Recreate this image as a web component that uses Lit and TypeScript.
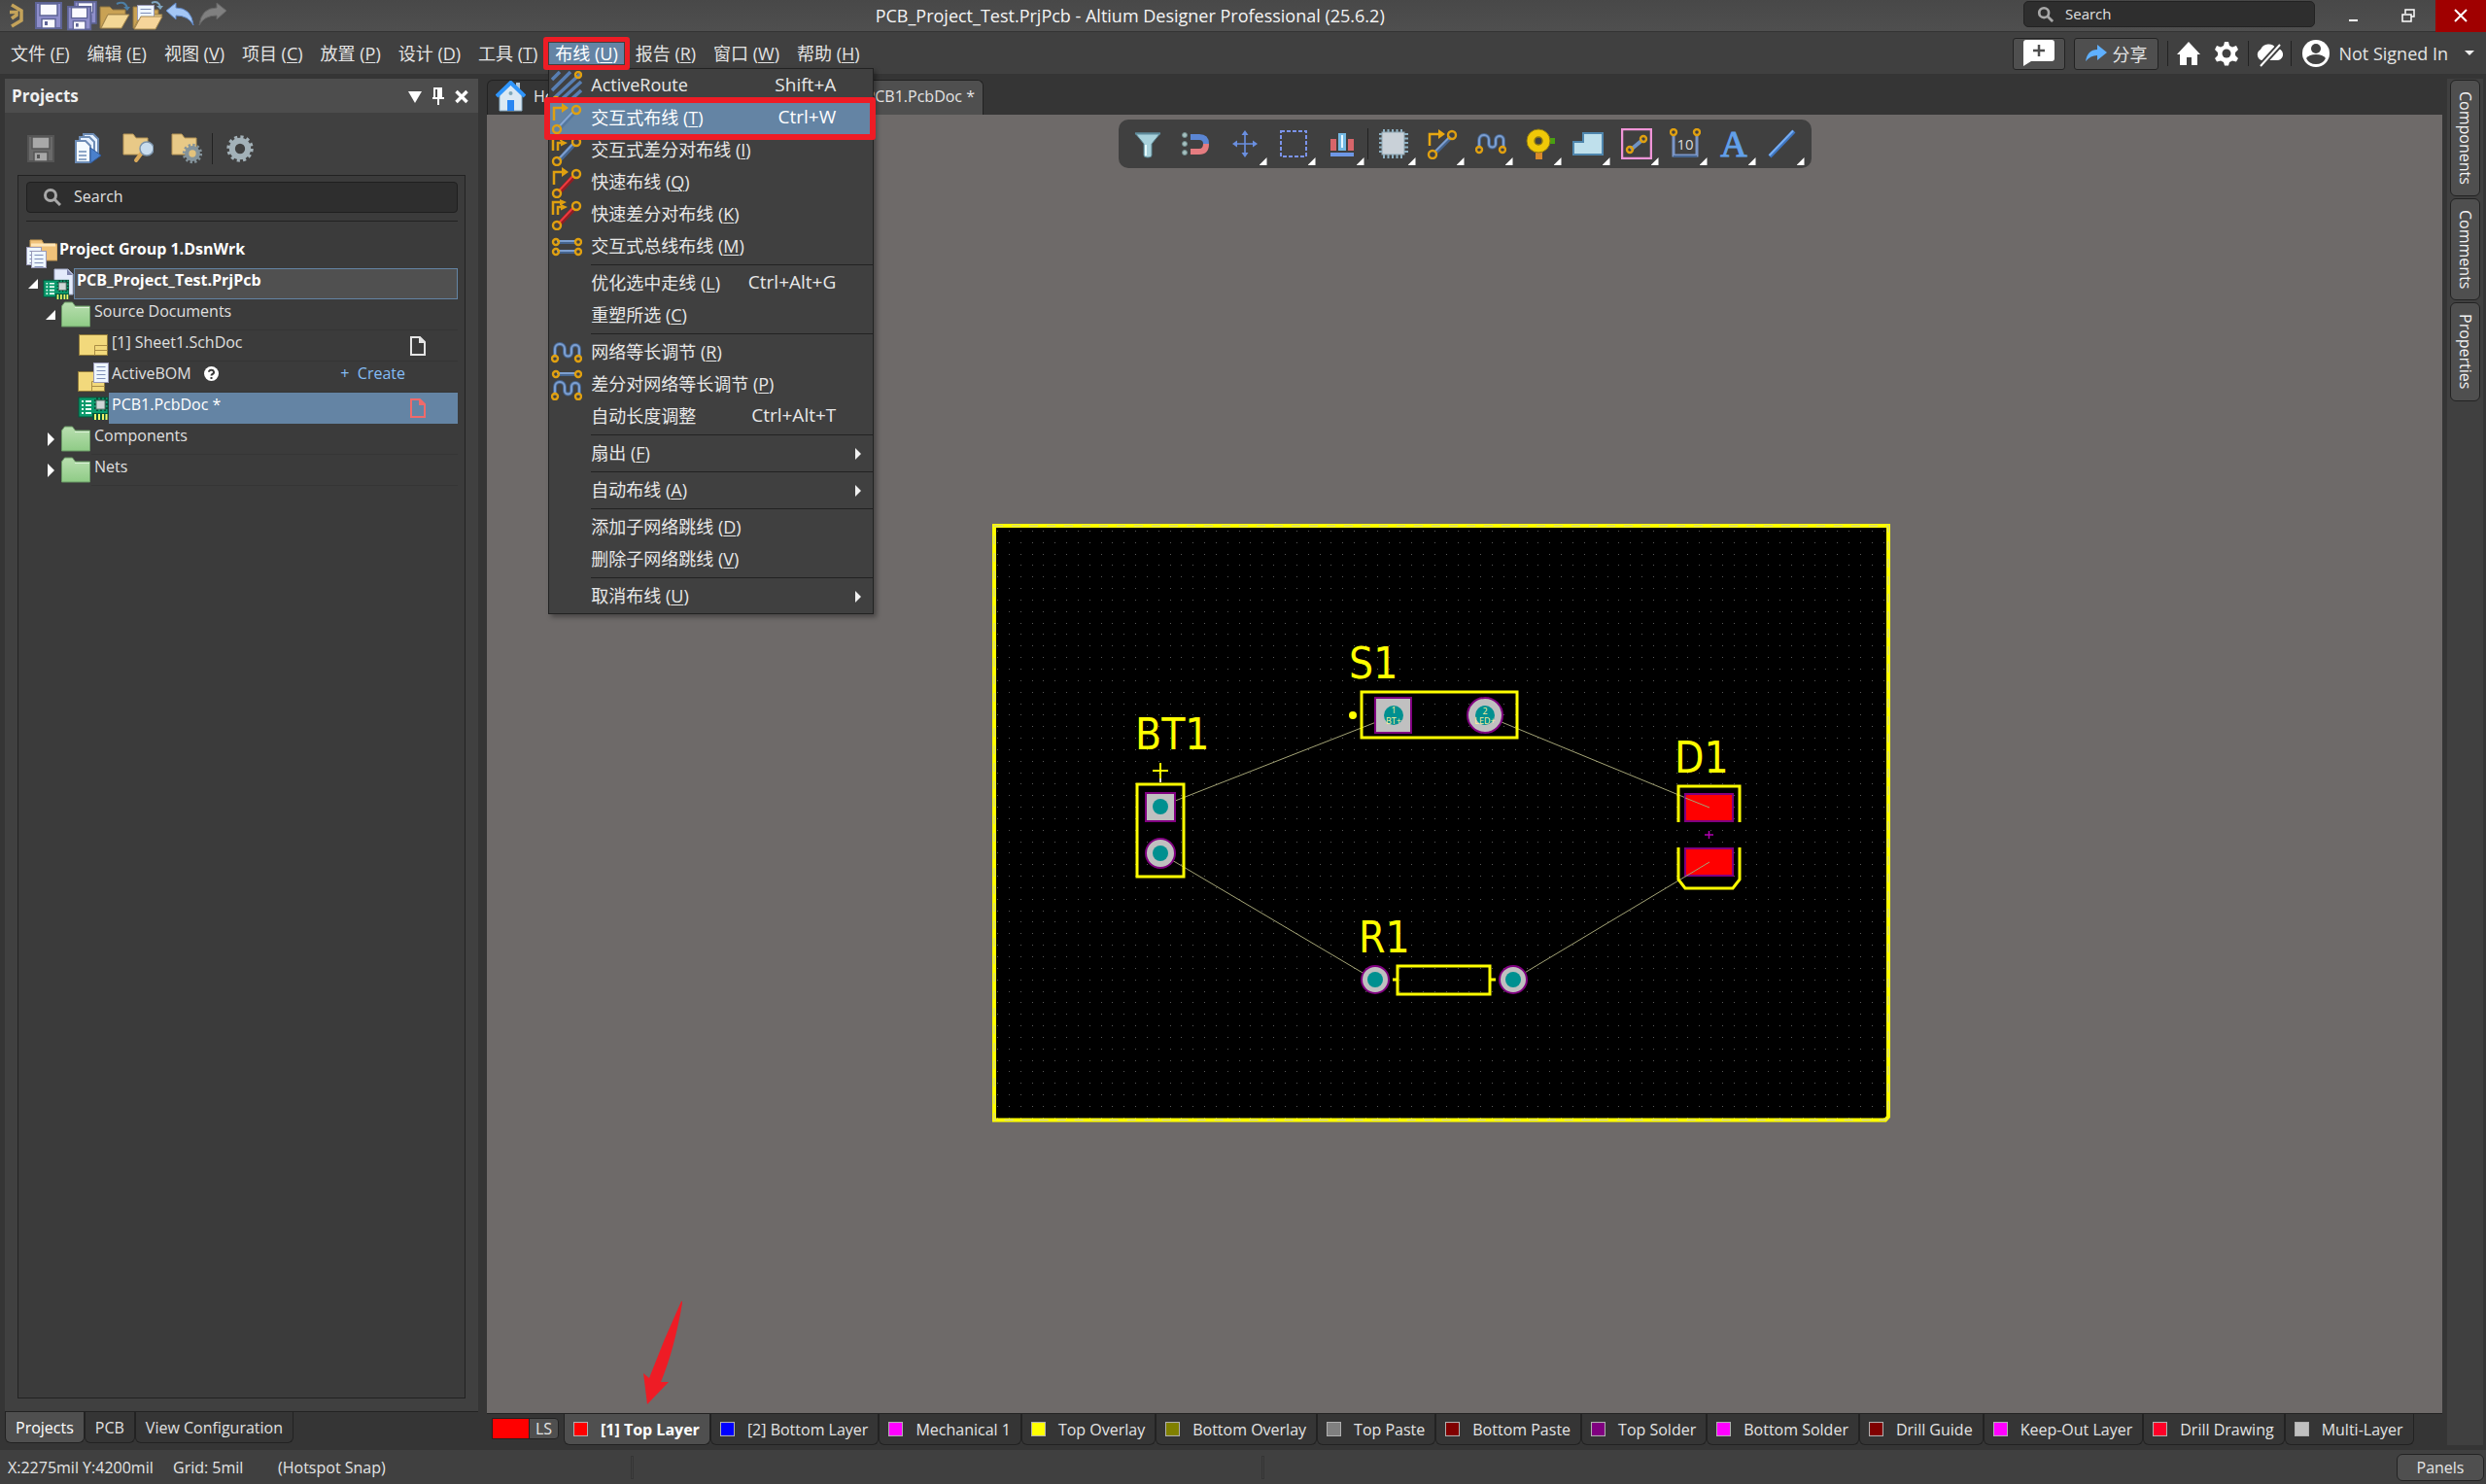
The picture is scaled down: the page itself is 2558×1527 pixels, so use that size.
import { LitElement, html, svg, css, nothing } from "lit";
import { customElement } from "lit/decorators.js";
import { classMap } from "lit/directives/class-map.js";

/* ---------- shared icon pieces (32 x 32 grid) ---------- */

const icon = (body: unknown, cls = "ico") =>
  html`<svg class=${cls} viewBox="0 0 32 32" aria-hidden="true">${body}</svg>`;

const ring = (x: number, y: number, r = 4) =>
  svg`<circle cx=${x} cy=${y} r=${r} fill="none" stroke="#e0a010" stroke-width="2.4"/>`;

const floppy = (x: number, y: number, s: number, a = "#8f8fcb", b = "#5e6496", c = "#fafaff") => svg`
  <g transform="translate(${x} ${y}) scale(${s})">
    <rect x="1" y="1" width="26" height="26" fill=${a} stroke=${b} stroke-width="2"/>
    <rect x="5" y="2" width="18" height="12" fill=${c} stroke=${b} stroke-width="1.5"/>
    <rect x="7" y="17.500" width="14" height="9.500" fill=${c} stroke=${b} stroke-width="1.5"/>
    <rect x="10" y="20" width="3" height="4" fill=${b}/>
  </g>`;

const folderOpen = (y = 0) => svg`
  <path d="M1 ${y + 7}h10l3 3h13v5H9L2 ${y + 29}H1z" fill="#c9a254" stroke="#8f7540"/>
  <path d="M9 ${y + 15}h22l-8 14H2z" fill="#f3d795" stroke="#a3864c"/>`;

const gear = (cx: number, cy: number, r: number, fill: string, hole: string, teeth = 12) => svg`
  <circle cx=${cx} cy=${cy} r=${r} fill="none" stroke=${fill} stroke-width="3.4"
    stroke-dasharray="${(Math.PI * r) / teeth} ${(Math.PI * r) / teeth}"/>
  <circle cx=${cx} cy=${cy} r=${r * 0.68} fill=${hole} stroke=${fill} stroke-width=${r * 0.5}/>`;

const wave = (y: number) => svg`
  <path d="M4 ${y + 17}V${y + 8}a5 5 0 0 1 10 0v4a3.500 3.500 0 0 0 7 0v-4a4 4 0 0 1 8 0v9" fill="none" stroke="#46658f" stroke-width="4"/>
  <path d="M4 ${y + 16}V${y + 8}a5 5 0 0 1 10 0v4a3.500 3.500 0 0 0 7 0v-4a4 4 0 0 1 8 0v8" fill="none" stroke="#7d9fd0" stroke-width="2"/>
  ${ring(4, y + 18, 3)}${ring(28, y + 18, 3)}`;

const chip = (x: number, y: number, s: number) => svg`
  <g transform="translate(${x} ${y}) scale(${s})">
    <path d="M6 1v30M10.500 1v30M15 1v30M19.500 1v30M24 1v30M1 6h30M1 10.500h30M1 15h30M1 19.500h30M1 24h30" stroke="#8fb3c6" stroke-width="2"/>
    <rect x="4" y="4" width="23" height="23" fill="#c9d1d8" stroke="#8fa7b4"/>
  </g>`;

const pcbCard = svg`
  <rect x="1" y="5" width="30" height="20" fill="#0a9a6c" stroke="#04573c"/>
  <path d="M4 9h2M4 13h2M4 17h2M4 21h2M8 9h6M8 13h6M8 17h6M8 21h6" stroke="#e8fff4" stroke-width="2"/>
  <path d="M17 8h14M17 12h14M17 16h14M20 5v14M24 5v14M28 5v14" stroke="#03402c" stroke-width="1.5"/>
  <rect x="19" y="8" width="9" height="9" fill="#cfd6d6" stroke="#5d7a70"/>
  <rect x="15" y="21" width="16" height="7" fill="#04573c"/>
  <path d="M18 22v6M22 22v6M26 22v6M29.500 22v6" stroke="#f1f56a" stroke-width="2"/>`;

const greenFolder = icon(svg`
  <defs><linearGradient id="gf" x1="0" y1="0" x2="0" y2="1"><stop offset="0" stop-color="#b9dfb0"/><stop offset="1" stop-color="#8fcb86"/></linearGradient></defs>
  <path d="M1.500 28V7l3-4h8l3 4h15v21z" fill="url(#gf)" stroke="#6b9a66"/>
  <path d="M15 8.500h15" stroke="#ddf2d8"/>`);

const sheet = (x: number, y: number, w: number, h: number) => svg`
  <rect x=${x} y=${y} width=${w} height=${h} fill="#f2d97c" stroke="#8f7a3a"/>
  <path d="M${x + w - 13} ${y + h}v-10h13M${x + w - 13} ${y + h - 5}h13" fill="none" stroke="#a98d45"/>`;

const page = (x: number, y: number, w: number, h: number) => svg`
  <rect x=${x} y=${y} width=${w} height=${h} fill="#eef6ff" stroke="#9a9ab8"/>
  <path d="M${x + 3} ${y + 4}h${w - 6}M${x + 3} ${y + 8}h${w - 6}M${x + 3} ${y + 12}h${w - 6}M${x + 3} ${y + 16}h${w - 6}" stroke="#7f8fb8"/>`;

const routeIcon = (line: string, light: string, pair = false) => icon(svg`
  <path d="M8 26L24 9" stroke=${line} stroke-width="5"/>
  <path d="M7.500 25L23 8.500" stroke=${light} stroke-width="2"/>
  <path d=${pair ? "M2 16V3h8M7 16V8h5" : "M3 18V5h10"} fill="none" stroke="#e0a010" stroke-width="2.500"/>
  <path d=${pair ? "M9 0l7 3-7 3.500zM10 5l7 3-7 3.500z" : "M11 0l7 5-7 5z"} fill="#e0a010"/>
  ${ring(26, 7)}${ring(6, 27)}`);

const ICONS = {
  active: icon(svg`
    <path d="M1 9L9 1M1 20L20 1M1 30L30 3M10 30L31 11M20 30L31 20" stroke="#587fb3" stroke-width="3.500"/>
    ${ring(28, 4, 3)}${ring(5, 30, 3)}`),
  route: routeIcon("#54779f", "#86a6d2"),
  routePair: routeIcon("#46658f", "#7d9fd0", true),
  quick: routeIcon("#8f1f24", "#ee3a3e"),
  quickPair: routeIcon("#8f1f24", "#ee3a3e", true),
  bus: icon(svg`<path d="M6 11h20M6 21h20" stroke="#46658f" stroke-width="4"/><path d="M6 10h20M6 20h20" stroke="#7d9fd0" stroke-width="2"/>
    ${ring(5, 11, 3)}${ring(28, 11, 3)}${ring(5, 21, 3)}${ring(28, 21, 3)}`),
  tune: icon(wave(4)),
  tunePair: icon(svg`<path d="M6 5h20" stroke="#46658f" stroke-width="4"/><path d="M6 4h20" stroke="#7d9fd0" stroke-width="2"/>
    ${ring(5, 5, 3)}${ring(28, 5, 3)}${wave(10)}`),
};

/* ---------- data ---------- */

interface MenuEntry { label: string; key?: string; short?: string; pic?: unknown; sub?: boolean; hot?: boolean; sep?: boolean }

const MENUS: [string, string][] = [
  ["文件", "F"], ["编辑", "E"], ["视图", "V"], ["项目", "C"], ["放置", "P"], ["设计", "D"],
  ["工具", "T"], ["布线", "U"], ["报告", "R"], ["窗口", "W"], ["帮助", "H"],
];

const SEP: MenuEntry = { label: "", sep: true };
const ROUTE_MENU: MenuEntry[] = [
  { label: "ActiveRoute", short: "Shift+A", pic: ICONS.active },
  { label: "交互式布线", key: "T", short: "Ctrl+W", pic: ICONS.route, hot: true },
  { label: "交互式差分对布线", key: "I", pic: ICONS.routePair },
  { label: "快速布线", key: "Q", pic: ICONS.quick },
  { label: "快速差分对布线", key: "K", pic: ICONS.quickPair },
  { label: "交互式总线布线", key: "M", pic: ICONS.bus },
  SEP,
  { label: "优化选中走线", key: "L", short: "Ctrl+Alt+G" },
  { label: "重塑所选", key: "C" },
  SEP,
  { label: "网络等长调节", key: "R", pic: ICONS.tune },
  { label: "差分对网络等长调节", key: "P", pic: ICONS.tunePair },
  { label: "自动长度调整", short: "Ctrl+Alt+T" },
  SEP,
  { label: "扇出", key: "F", sub: true },
  SEP,
  { label: "自动布线", key: "A", sub: true },
  SEP,
  { label: "添加子网络跳线", key: "D" },
  { label: "删除子网络跳线", key: "V" },
  SEP,
  { label: "取消布线", key: "U", sub: true },
];

const LAYERS: [string, string][] = [
  ["[1] Top Layer", "#ff0000"], ["[2] Bottom Layer", "#0000ff"], ["Mechanical 1", "#ff00ff"],
  ["Top Overlay", "#ffff00"], ["Bottom Overlay", "#808000"], ["Top Paste", "#808080"],
  ["Bottom Paste", "#800000"], ["Top Solder", "#800080"], ["Bottom Solder", "#ff00ff"],
  ["Drill Guide", "#800000"], ["Keep-Out Layer", "#ff00ff"], ["Drill Drawing", "#ff0028"],
  ["Multi-Layer", "#c0c0c0"],
];

const base = css`
  * { box-sizing: border-box; }
  button, input {
    font: inherit; color: inherit; background: none; border: 0; padding: 0; margin: 0;
    text-align: left; white-space: nowrap;
  }
  svg { display: block; flex: none; }
  .ico { width: 32px; height: 32px; }
`;

/* ---------- project tree panel ---------- */

@customElement("projects-panel")
export class ProjectsPanel extends LitElement {
  static styles = [base, css`
    :host { display: flex; flex-direction: column; width: 487px; flex: none; }
    .head {
      display: flex; align-items: center; height: 35px; padding: 0 10px 0 7px; gap: 10px;
      background: #4d4d4d; color: #f0f0f0; font-weight: 600;
    }
    .head h2 { flex: 1; margin: 0; font-size: 17px; font-weight: 700; }
    .head button { width: 14px; height: 18px; }
    .body {
      flex: 1; display: flex; flex-direction: column; background: #404040;
      padding: 0 13px 13px; border-bottom: 1px solid #222;
    }
    .tools { display: flex; align-items: center; height: 64px; padding: 10px 0 0 8px; gap: 18px; }
    .tools i { width: 1px; height: 32px; background: #222; margin: 0 -6px 0 -8px; }
    .box {
      flex: 1; border: 1px solid #222; background: #3b3b3b; padding: 6px 7px 6px 8px;
      display: flex; flex-direction: column;
    }
    .search {
      display: flex; align-items: center; height: 32px; border: 1px solid #1f1f1f; border-radius: 4px;
      background: #2e2e2e; padding: 0 0 2px 16px; gap: 13px;
    }
    .search svg { width: 19px; height: 19px; }
    .search input { flex: 1; outline: none; }
    .search input::placeholder { color: #e0e0e0; opacity: 1; }
    .tree { border-top: 1px solid #222; margin: 8px 0 0; padding: 16px 0 0; list-style: none; }
    .row { display: flex; height: 32px; }
    .d2 { padding-left: 18px; }
    .d3 { padding-left: 36px; }
    .arrow { width: 17px; height: 32px; flex: none; }
    .label {
      flex: 1; display: flex; height: 32px; padding-left: 3px; line-height: 24px;
      border-bottom: 1px solid #353535; color: #e0e0e0;
    }
    .d0 .label { border: 0; padding-left: 2px; }
    .bold { font-weight: 700; color: #fff; }
    .project .label { background: #505050; border: 1px solid #6484a4; padding-left: 2px; line-height: 22px; }
    .current .label { background: #6484a4; color: #fff; border-color: #6484a4; }
    .name { flex: 1; display: flex; gap: 13px; }
    .name svg { width: 15px; height: 15px; margin-top: 5px; }
    .create { color: #85bdf5; margin-right: 54px; text-decoration: none; }
    .state { width: 16px; height: 20px; margin: 6px 33px 0 0; }
    .tabs { display: flex; height: 32px; margin-bottom: 7px; }
    .tabs button {
      padding: 1px 10px 0; border: 1px solid #222; border-top: 0; border-radius: 0 0 6px 6px;
      color: #e0e0e0; height: 32px;
    }
    .tabs .on { background: #4f4f4f; color: #fff; }
  `];

  private arrow(open?: boolean) {
    return html`<svg class="arrow" viewBox="0 0 17 32" aria-hidden="true">
      ${open === undefined ? nothing : open
        ? svg`<path d="M12 11v10H2z" fill="#fff"/>`
        : svg`<path d="M4 9v14l7-7z" fill="#fff"/>`}</svg>`;
  }

  private doc(color: string) {
    return html`<svg class="state" viewBox="0 0 16 20" aria-hidden="true">
      <path d="M1 1h9l5 5v13H1z" fill="none" stroke=${color} stroke-width="2"/><path d="M9 0v7h7z" fill=${color}/></svg>`;
  }

  render() {
    return html`
      <header class="head">
        <h2>Projects</h2>
        <button aria-label="Panel menu"><svg width="14" height="18" viewBox="0 0 14 18"><path d="M0 4h14L7 16z" fill="#fff"/></svg></button>
        <button aria-label="Pin"><svg width="14" height="18" viewBox="0 0 14 18"><path d="M2 0h9v10h2v2H8v6H6v-6H1v-2h1zM4 2v8h2V2z" fill="#fff" fill-rule="evenodd"/></svg></button>
        <button aria-label="Close"><svg width="14" height="18" viewBox="0 0 14 18"><path d="M1.500 4l11 11M12.500 4l-11 11" stroke="#fff" stroke-width="3.500"/></svg></button>
      </header>
      <div class="body">
        <div class="tools">
          <button aria-label="Save">${icon(floppy(2, 2, 1, "#6a6a6a", "#555", "#a8a8a8"))}</button>
          <button aria-label="Open documents">${icon(svg`
            <path d="M10 1h10l5 5v17H10z" fill="#e8f2ff" stroke="#6d8cb5" stroke-width="2"/>
            <path d="M6 4h10l5 5v17H6z" fill="#e8f2ff" stroke="#6d8cb5" stroke-width="2"/>
            <path d="M2 8h10l5 5v17H2z" fill="#f4fbff" stroke="#6d8cb5" stroke-width="2"/>
            <path d="M5 19h8M5 23h8M5 27h8" stroke="#6d8cb5" stroke-width="1.500"/>
            <path d="M17 15l11 8-11 8z" fill="#4a80cc" stroke="#2f5a9c"/>`)}</button>
          <button aria-label="Explore project">${icon(svg`
            <path d="M1 22V1h10l3 4h12v17z" fill="#e8c987" stroke="#b89757"/>
            <path d="M14 28l6-8" stroke="#d9a95a" stroke-width="4" stroke-linecap="round"/>
            <circle cx="25" cy="16" r="7" fill="#c8dcee" stroke="#7b93ab" stroke-width="1.500"/>`)}</button>
          <button aria-label="Project options">${icon(svg`
            <path d="M1 22V1h10l3 4h12v17z" fill="#e8c987" stroke="#b89757"/>
            ${gear(22, 21, 8.5, "#84939b", "#e3c27c")}`)}</button>
          <i></i>
          <button aria-label="Settings">${icon(gear(16, 16, 12, "#a3b1b8", "#404040"))}</button>
        </div>
        <div class="box">
          <label class="search">
            <svg viewBox="0 0 19 19" aria-hidden="true"><circle cx="8" cy="8" r="5.500" fill="none" stroke="#a8a8a8" stroke-width="3"/><path d="M12 12l6 6" stroke="#a8a8a8" stroke-width="3"/></svg>
            <input type="text" placeholder="Search" aria-label="Search projects" />
          </label>
          <ul class="tree">
            <li class="row d0">${icon(svg`
              <path d="M4 24V3h12l2 4h14v17z" fill="#f0c27a" stroke="#c79a52"/><path d="M5 8h25" stroke="#ffe6b8" stroke-width="3"/>
              ${page(0.5, 10.5, 15, 18)}${page(5.5, 14.5, 15, 17)}`)}
              <div class="label bold">Project Group 1.DsnWrk</div></li>
            <li class="row d1 project">${this.arrow(true)}${icon(svg`
              <path d="M12 1h14l5 5v21H12z" fill="#e4ebfb" stroke="#a9b2d0"/><path d="M25 1v6h6z" fill="#7f86ad"/>
              <g transform="translate(0 8) scale(.86)">${pcbCard}</g>`)}
              <div class="label bold">PCB_Project_Test.PrjPcb</div></li>
            <li class="row d2">${this.arrow(true)}${greenFolder}<div class="label">Source Documents</div></li>
            <li class="row d3">${this.arrow()}${icon(sheet(1.5, 4.5, 29, 21))}
              <div class="label"><span class="name">[1] Sheet1.SchDoc</span>${this.doc("#e4e4e4")}</div></li>
            <li class="row d3">${this.arrow()}${icon(svg`${sheet(0.5, 10.5, 27, 20)}${page(16.5, 1.5, 15, 20)}`)}
              <div class="label"><span class="name">ActiveBOM
                <svg viewBox="0 0 15 15" aria-hidden="true"><circle cx="7.500" cy="7.500" r="7.500" fill="#fff"/>
                  <path d="M5 5.800a2.500 2.300 0 1 1 3.600 2.200q-1.100.6-1.100 1.600" fill="none" stroke="#3b3b3b" stroke-width="2"/><rect x="6.500" y="11" width="2" height="2" fill="#3b3b3b"/></svg></span>
                <a class="create" href="#">+&nbsp; Create</a></div></li>
            <li class="row d3 current">${this.arrow()}${icon(pcbCard)}
              <div class="label"><span class="name">PCB1.PcbDoc *</span>${this.doc("#f06a6a")}</div></li>
            <li class="row d2">${this.arrow(false)}${greenFolder}<div class="label">Components</div></li>
            <li class="row d2">${this.arrow(false)}${greenFolder}<div class="label">Nets</div></li>
          </ul>
        </div>
      </div>
      <nav class="tabs">
        <button class="on">Projects</button><button>PCB</button><button>View Configuration</button>
      </nav>`;
  }
}

/* ---------- board drawing ---------- */

const gridDots = (() => {
  const pitch = 11.84;
  let d = "";
  for (let r = 0; r < 52; r++)
    for (let c = 0; c < 78; c++)
      d += `M${Math.round(1025 + c * pitch)} ${Math.round(545.9 + r * pitch)}h1v1h-1z`;
  return d;
})();

@customElement("board-view")
export class BoardView extends LitElement {
  static styles = [base, css`
    :host { display: block; }
    .name { font: 44px "DejaVu Sans Condensed", "DejaVu Sans", sans-serif; fill: #ff0; }
    .pad { font: 9px "Open Sans", sans-serif; fill: #ffef9a; text-anchor: middle; }
    .silk { fill: none; stroke: #ff0; stroke-width: 3; }
    .net { stroke: #a4a476; stroke-width: 1; }
    .th { fill: #c0c0c0; stroke: #800080; stroke-width: 2; }
    .smd { fill: #f00; stroke: #800080; stroke-width: 2; }
    .hole { fill: #009090; }
  `];

  render() {
    return html`<svg width="925" height="616" viewBox="1020 539 925 616" role="img" aria-label="PCB layout">
      <path d="M1022 541H1942V1149L1939 1152H1022z" fill="#000"/>
      <path d=${gridDots} fill="#585858" shape-rendering="crispEdges"/>
      <path d="M1022 541H1942V1149L1939 1152.500H1022z" fill="none" stroke="#ff0" stroke-width="4"/>
      <path d="M1022 541H1942V1149L1939 1152.500H1022z" fill="none" stroke="#c9c9a8" stroke-width="1" stroke-dasharray="9 9"/>

      <path class="net" d="M1193 830L1433 736M1527 736L1758 831M1193 878L1413 1008M1556 1008L1758 887" fill="none"/>

      <text class="name" x="1387" y="698">S1</text>
      <rect class="silk" x="1400" y="712" width="160" height="47"/>
      <circle cx="1391" cy="736" r="4" fill="#ff0"/>
      <rect class="th" x="1414" y="718" width="37" height="36"/>
      <circle class="hole" cx="1433" cy="736" r="10"/>
      <text class="pad" x="1433" y="734">1</text><text class="pad" x="1433" y="745">BT+</text>
      <circle class="th" cx="1527" cy="736" r="18"/>
      <circle class="hole" cx="1527" cy="736" r="10"/>
      <text class="pad" x="1527" y="735">2</text><text class="pad" x="1527" y="745">LED+</text>

      <text class="name" x="1167" y="771">BT1</text>
      <path d="M1193 785v16M1185 793h16" stroke="#ff0" stroke-width="2"/>
      <path d="M1193 801v4" stroke="#e8d8d8" stroke-width="2"/>
      <rect class="silk" x="1169" y="807" width="48" height="95"/>
      <rect class="th" x="1178" y="816" width="30" height="29"/>
      <circle class="hole" cx="1193" cy="830" r="8"/>
      <circle class="th" cx="1193" cy="878" r="15"/>
      <circle class="hole" cx="1193" cy="878" r="8"/>

      <text class="name" x="1397" y="980">R1</text>
      <rect class="silk" x="1437" y="994" width="95" height="29"/>
      <path class="silk" d="M1432 1008h5M1533 1008h5"/>
      <circle class="th" cx="1414" cy="1008" r="14"/><circle class="hole" cx="1414" cy="1008" r="8"/>
      <circle class="th" cx="1556" cy="1008" r="14"/><circle class="hole" cx="1556" cy="1008" r="8"/>

      <text class="name" x="1722" y="795">D1</text>
      <path class="silk" d="M1726 846V809H1789V846M1726 872V905L1733 914H1782L1789 905V872"/>
      <rect class="smd" x="1733" y="817" width="49" height="28"/>
      <rect class="smd" x="1733" y="873" width="49" height="28"/>
      <path class="net" d="M1733 821L1758 831M1733 902L1758 887" fill="none"/>
      <path d="M1757.500 855v8M1753 859h9" stroke="#b000b0" stroke-width="1.500"/>
    </svg>`;
  }
}

/* ---------- application shell ---------- */

@customElement("app-root")
export class AppRoot extends LitElement {
  static styles = [base, css`
    :host {
      display: flex; flex-direction: column; height: 100vh; overflow: hidden; background: #353535;
      color: #e4e4e4; font: 16px "Open Sans", "Noto Sans CJK SC", sans-serif;
    }
    .title {
      display: flex; align-items: center; height: 33px; flex: none; position: relative;
      background: linear-gradient(#484848, #4f4f4f); border-bottom: 1px solid #333;
    }
    .logo { width: 34px; display: flex; justify-content: center; }
    .quick { display: flex; gap: 2px; flex: 13; }
    .title h1 { margin: 0; font-size: 18px; font-weight: 400; color: #f4f4f4; white-space: nowrap; }
    .right { flex: 17; display: flex; justify-content: flex-end; align-items: flex-start; height: 33px; }
    .find {
      display: flex; align-items: center; gap: 12px; width: 300px; height: 27px; margin: 1px 12px 0 0;
      padding-left: 13px; border: 1px solid #222; border-radius: 5px; background: #2e2e2e;
    }
    .find svg { width: 17px; height: 17px; }
    .find input { flex: 1; min-width: 0; outline: none; font-size: 15px; }
    .find input::placeholder { color: #e0e0e0; opacity: 1; }
    .win { width: 56px; height: 32px; display: flex; align-items: center; justify-content: center; }
    .close { width: 52px; height: 33px; background: #a00000; }

    .menubar {
      display: flex; align-items: center; height: 43px; flex: none; padding: 1px 4px 0 5px; background: #404040;
    }
    .menus { display: flex; gap: 6px; flex: 1; font-size: 18px; }
    .entry { position: relative; display: flex; }
    .entry > button { height: 22px; line-height: 22px; padding: 0 6px; }
    u { text-underline-offset: 2px; text-decoration-thickness: 1px; }
    .entry.open > button { background: #6484a4; color: #fff; }
    .mark { position: absolute; border: 5px solid #ee1c25; border-radius: 3px; z-index: 3; pointer-events: none; }
    .entry .mark { inset: -6px -6px; }

    .popup {
      position: absolute; left: -1px; top: 26px; width: 335px; z-index: 2; padding: 1px 0;
      background: #404040; border: 1px solid #222; box-shadow: 3px 3px 5px rgba(0, 0, 0, .35);
    }
    .item {
      display: flex; align-items: center; height: 33px; width: 100%; padding: 0 12px 0 2px;
      position: relative; color: #e8e8e8;
    }
    .item.hot { background: #6484a4; color: #fff; }
    .item .pic { width: 32px; height: 32px; margin-right: 9px; flex: none; }
    .item .txt { flex: 1; padding-bottom: 3px; }
    .item .key { margin-right: 26px; padding-bottom: 3px; font-size: 19px; }
    .item .tri { width: 6px; height: 12px; }
    .item .mark { inset: -5px -3px -6px -5px; border-width: 6px; }
    .popup hr { margin: 2px 0 2px 43px; border: 0; height: 1px; background: #222; }

    .account { display: flex; align-items: center; font-size: 18px; }
    .btn {
      height: 33px; border: 1px solid #222; border-radius: 3px; background: #4f4f4f;
      display: flex; align-items: center; justify-content: center; gap: 5px;
    }
    .note { width: 54px; margin-right: 9px; }
    .share { width: 87px; margin-right: 9px; }
    .bar { width: 1px; height: 26px; background: #222; }
    .account .g { width: 28px; height: 28px; }
    .flat { display: flex; align-items: center; margin: 0 8px 0 7px; }
    .flat + .flat { margin-left: 3px; }
    .account .sign { gap: 9px; margin: 0 0 0 11px; }

    .work { flex: 1; min-height: 0; display: flex; padding: 5px 3px 0 5px; }
    .center { flex: 1; min-width: 0; display: flex; flex-direction: column; margin: 0 5px 0 9px; }
    .docs { display: flex; height: 37px; width: 511px; }
    .docs button {
      display: flex; align-items: center; gap: 8px; height: 36px; padding: 0 8px 4px; margin-top: 1px;
      border: 1px solid #222; border-bottom: 0; border-radius: 6px 6px 0 0;
    }
    .docs .home { flex: 1; }
    .docs .on { background: #4f4f4f; }
    .docs .h { width: 31px; height: 32px; }
    .canvas { position: relative; flex: 1; min-height: 0; background: #6e6a69; }
    .tools {
      display: flex; align-items: center; width: max-content; height: 50px; margin: 5px auto 0; padding: 0 5px;
      background: #404040; border-radius: 10px;
    }
    .tools button { position: relative; width: 50px; height: 50px; display: flex; align-items: center; justify-content: center; }
    .tools .more::after {
      content: ""; position: absolute; right: 2px; bottom: 3px; width: 8px; height: 8px;
      background: #fff; clip-path: polygon(100% 0, 100% 100%, 0 100%);
    }
    .tools .bar { width: 1px; height: 32px; margin: 0 1px; }
    board-view { position: absolute; left: 520px; top: 421px; }
    .pointer { position: absolute; left: 160px; bottom: 8px; width: 42px; height: 108px; }

    .layers { display: flex; height: 33px; margin-bottom: 5px; border-top: 1px solid #222; padding-left: 5px; }
    .ls { display: flex; width: 69px; height: 22px; margin: 4px 5px 0 0; border: 1px solid #222; border-radius: 0 4px 4px 0; background: #4f4f4f; }
    .ls i { width: 37px; background: #f00; }
    .ls span { flex: 1; text-align: center; line-height: 20px; border-left: 1px solid #222; }
    .layer {
      display: flex; align-items: center; gap: 13px; height: 32px; padding: 0 10px 0 9px;
      border: 1px solid #222; border-top: 0; border-radius: 0 0 6px 6px;
    }
    .layer.on { background: #4f4f4f; color: #fff; font-weight: 700; }
    .sw { width: 15px; height: 15px; border: 1px solid #b0b0b0; }

    .dock { display: flex; flex-direction: column; gap: 2px; width: 37px; margin-bottom: 5px; padding: 1px 3px; background: #404040; }
    .dock button {
      writing-mode: vertical-rl; width: 31px; padding: 11px 0; line-height: 29px; color: #f4f4f4;
      border: 1px solid #222; border-radius: 6px; background: #4f4f4f;
    }
    .status { display: flex; align-items: center; height: 35px; flex: none; padding: 0 2px 0 8px; background: #404040; }
    .status .xy { width: 170px; }
    .status .grid { width: 108px; }
    .status .snap { width: 363px; }
    .status i { width: 3px; height: 24px; border: 1px solid #353535; }
    .status .mid { width: 646px; }
    .status .panels { margin-left: auto; width: 90px; height: 28px; border: 1px solid #222; border-radius: 6px; background: #4f4f4f; text-align: center; }
  `];

  private popup() {
    return html`<div class="popup" role="menu">
      ${ROUTE_MENU.map((m) => m.sep ? html`<hr />` : html`
        <button role="menuitem" class=${classMap({ item: true, hot: !!m.hot })}>
          <span class="pic">${m.pic ?? nothing}</span>
          <span class="txt">${m.label}${m.key ? html` (<u>${m.key}</u>)` : nothing}</span>
          ${m.short ? html`<span class="key">${m.short}</span>` : nothing}
          ${m.sub ? html`<svg class="tri" viewBox="0 0 6 12" aria-hidden="true"><path d="M0 0v12l6-6z" fill="#f0f0f0"/></svg>` : nothing}
          ${m.hot ? html`<span class="mark"></span>` : nothing}
        </button>`)}
    </div>`;
  }

  private toolbar() {
    const pics: [string, unknown, boolean][] = [
      ["Filter", svg`<path d="M3 5h26l-9 11v12q0 2-4 2t-4-2V16z" fill="#a9d2dc" stroke="#5c8794"/><path d="M3 5.500h26" stroke="#5f8c9c" stroke-width="2"/><path d="M14 17v11" stroke="#e6fbff" stroke-width="2"/>`, false],
      ["Snapping", svg`<path d="M10 9h9q7 0 7 7" fill="none" stroke="#5b86d4" stroke-width="6"/><path d="M10 24h9q7 0 7-8" fill="none" stroke="#e57c80" stroke-width="6"/>
        <g fill="#a7c0c0" stroke="#6f8a8a"><circle cx="4" cy="7" r="2.500"/><circle cx="4" cy="16" r="2.500"/><circle cx="4" cy="25" r="2.500"/></g>`, false],
      ["Move", svg`<path d="M16 4v24M5 16h22" stroke="#6a8fe0" stroke-width="1.600"/><path d="M16 2l3.500 5h-7zM16 30l3.500-5h-7zM3 16l5-3.500v7zM29 16l-5-3.500v7z" fill="#6a8fe0"/>`, true],
      ["Select area", svg`<rect x="3" y="3" width="26" height="26" fill="none" stroke="#7b93ea" stroke-width="2" stroke-dasharray="4 2"/>`, true],
      ["Align", svg`<rect x="4" y="11" width="6" height="12" fill="#d7656a"/><rect x="12" y="5" width="8" height="18" fill="#74b9e2"/><rect x="15" y="7" width="2" height="13" fill="#e6f7ff"/><rect x="22" y="11" width="6" height="12" fill="#d7656a"/><rect x="4" y="25" width="24" height="4" fill="#6e97e6"/>`, true],
      ["Component", chip(0, 0, 1), true],
      ["Route", svg`<path d="M9 25L25 9" stroke="#46658f" stroke-width="4.500"/><path d="M8.500 24L24 8.500" stroke="#7d9fd0" stroke-width="2"/><path d="M3 18V6h11" fill="none" stroke="#e8a812" stroke-width="2.500"/><path d="M12 1l7 5-7 5z" fill="#e8a812"/>${ring(26, 7)}${ring(6, 27)}`, true],
      ["Tune", wave(4), true],
      ["Via", svg`<rect x="18" y="10" width="14" height="6" fill="#49a012"/><rect x="12" y="20" width="7" height="12" fill="#d98a2b"/><circle cx="15" cy="13" r="12" fill="#f0c808" stroke="#8f7a10"/><circle cx="15" cy="13" r="4" fill="#404040" stroke="#8f7a10" stroke-width="1.500"/>`, true],
      ["Polygon", svg`<path d="M1 27V14h10V5h20v22z" fill="#bfe0ec" stroke="#4f86ad" stroke-width="2"/>`, true],
      ["Room", svg`<rect x="1" y="1" width="30" height="30" fill="none" stroke="#f095d8" stroke-width="2.500"/><path d="M10 22L22 12" stroke="#6f93c4" stroke-width="4"/>${ring(23, 11, 3)}${ring(9, 22, 3)}`, true],
      ["Dimension", svg`<path d="M4 6v22h24V6" fill="none" stroke="#7a96c8" stroke-width="3"/><path d="M4 29h24" stroke="#46658f" stroke-width="2"/>${ring(4, 4, 3)}${ring(28, 4, 3)}<text x="16" y="22" font-size="15" text-anchor="middle" fill="#dcdcdc">10</text>`, true],
      ["Text", svg`<text x="16" y="29" font-size="38" font-family="Liberation Serif, serif" text-anchor="middle" fill="#62a0ea" stroke="#62a0ea">A</text>`, true],
      ["Line", svg`<path d="M3 29L28 3" stroke="#3f76c0" stroke-width="4"/><path d="M2.500 28L27 2.500" stroke="#77aef5" stroke-width="2"/>`, true],
    ];
    return html`<div class="tools">${pics.map(([name, body, more], i) => html`
      ${i === 5 ? html`<span class="bar"></span>` : nothing}
      <button aria-label=${name} class=${classMap({ more })}>${icon(body)}</button>`)}</div>`;
  }

  render() {
    return html`
      <header class="title">
        <div class="logo"><svg width="16" height="26" viewBox="0 0 16 26" aria-hidden="true">
          <path d="M3 2L13 8V18L3 24M3 16L8 12.500V9.500H1" fill="none" stroke="#c4a35a" stroke-width="3.500"/></svg></div>
        <div class="quick">
          <button aria-label="Save">${icon(floppy(2, 2, 1))}</button>
          <button aria-label="Save all">${icon(svg`${floppy(8, 1, 0.85)}${floppy(1, 6, 0.9)}`)}</button>
          <button aria-label="Open">${icon(svg`${folderOpen()}<path d="M18 4q8-4 11 4" fill="none" stroke="#4d7fa5" stroke-width="2"/><path d="M25 7h7l-3 4z" fill="#4d7fa5"/>`)}</button>
          <button aria-label="Open project">${icon(svg`${folderOpen()}${page(5.5, 5.5, 17, 15)}<path d="M9 17h22l-7 13H2z" fill="#f6d59a" stroke="#a3864c"/><path d="M20 3q7-3 9 4" fill="none" stroke="#7fa5c0" stroke-width="2"/><path d="M25 6h7l-3 4z" fill="#7fa5c0"/>`)}</button>
          <button aria-label="Undo">${icon(svg`<path d="M1 11L11 3v5q16 0 18 18-5-10-18-10v4z" fill="#a3c6f5" stroke="#5f86c4"/>`)}</button>
          <button aria-label="Redo">${icon(svg`<path d="M29 11L19 3v5Q3 8 1 26q5-10 18-10v4z" fill="#808080" stroke="#666"/>`)}</button>
        </div>
        <h1>PCB_Project_Test.PrjPcb - Altium Designer Professional (25.6.2)</h1>
        <div class="right">
          <label class="find">
            <svg viewBox="0 0 19 19" aria-hidden="true"><circle cx="8" cy="8" r="5.500" fill="none" stroke="#a8a8a8" stroke-width="3"/><path d="M12 12l6 6" stroke="#a8a8a8" stroke-width="3"/></svg>
            <input type="text" placeholder="Search" aria-label="Search" />
          </label>
          <button class="win" aria-label="Minimize"><svg width="10" height="14" viewBox="0 0 10 14"><path d="M0 12h9" stroke="#fff" stroke-width="2"/></svg></button>
          <button class="win" aria-label="Restore"><svg width="14" height="14" viewBox="0 0 14 14"><path d="M1 6h9v7H1zM4 5V1h9v7h-3" fill="none" stroke="#fff" stroke-width="1.500"/></svg></button>
          <button class="win close" aria-label="Close"><svg width="14" height="14" viewBox="0 0 14 14"><path d="M1 1l12 12M13 1L1 13" stroke="#fff" stroke-width="2"/></svg></button>
        </div>
      </header>

      <div class="menubar">
        <nav class="menus">
          ${MENUS.map(([label, key]) => html`<div class=${classMap({ entry: true, open: label === "布线" })}>
            <button>${label} (<u>${key}</u>)</button>
            ${label === "布线" ? html`${this.popup()}<span class="mark"></span>` : nothing}
          </div>`)}
        </nav>
        <div class="account">
          <button class="btn note" aria-label="Add comment"><svg width="32" height="28" viewBox="0 0 32 28"><path d="M0 27V3q0-3 3-3h26q3 0 3 3v16q0 3-3 3H8z" fill="#fff"/><path d="M16 5v12M10 11h12" stroke="#4f4f4f" stroke-width="2.500"/></svg></button>
          <button class="btn share"><svg width="22" height="18" viewBox="0 0 22 18" aria-hidden="true"><path d="M0 17Q2 5 12 5V0l10 8-10 8v-5Q5 11 0 17z" fill="#5fb0ff"/></svg>分享</button>
          <span class="bar"></span>
          <button class="flat" aria-label="Home"><svg class="g" viewBox="0 0 28 28"><path d="M14 2L26 15H23V26H17V18H12V26H5V15H2z" fill="#fff"/></svg></button>
          <button class="flat" aria-label="Preferences"><svg class="g" viewBox="0 0 28 28"><path d="M12 2h4l1 4 3 1.500 4-1.500 2 4-3 3v3l3 3-2 3.500-4-1-3 1.500-1 3.500h-4l-1-3.500-3-1.500-4 1L2 19l3-3v-3l-3-3 2-4 4 1.500L11 6z" fill="#fff"/><circle cx="14" cy="14" r="4.500" fill="#404040"/></svg></button>
          <span class="bar"></span>
          <button class="flat" aria-label="Cloud"><svg class="g" viewBox="0 0 28 28"><path d="M6 21a6 6 0 0 1-1-11 9 9 0 0 1 16-1 6 6 0 0 1 2 12z" fill="#fff"/><path d="M4 28L26 4" stroke="#404040" stroke-width="6"/><path d="M5 27L25 5" stroke="#fff" stroke-width="2"/></svg></button>
          <span class="bar"></span>
          <button class="flat sign"><svg class="g" viewBox="0 0 28 28" aria-hidden="true"><circle cx="14" cy="14" r="14" fill="#fff"/><circle cx="14" cy="9" r="5" fill="#404040"/><path d="M4 19q3-4 10-4t10 4q-3 6-10 6T4 19z" fill="#404040"/></svg>
            Not Signed In
            <svg width="26" height="6" viewBox="0 0 26 6" aria-hidden="true"><path d="M8 0h10l-5 5z" fill="#f0f0f0"/></svg></button>
        </div>
      </div>

      <div class="work">
        <projects-panel></projects-panel>
        <main class="center">
          <nav class="docs">
            <button class="home"><svg class="h" viewBox="0 0 31 32" aria-hidden="true"><path d="M21 2h4v8h-4z" fill="#b5c7d6"/><path d="M4 14L15.500 4 27 14v17H4z" fill="#dbe8f3" stroke="#86a9c0"/><path d="M1 16L15.500 2 30 16" fill="none" stroke="#2f95fb" stroke-width="4"/><rect x="12" y="20" width="7" height="11" fill="#2a86f2"/><circle cx="15.500" cy="13" r="2" fill="#7fa6b8"/></svg>Home</button>
            <button class="on">PCB1.PcbDoc *</button>
          </nav>
          <section class="canvas">
            ${this.toolbar()}
            <board-view></board-view>
            <svg class="pointer" viewBox="0 0 42 108" aria-hidden="true"><path d="M40 1Q41 0 41 3Q33 50 19 84L27 84 5 107 1 75 7 80Q22 40 40 1z" fill="#ee1c25"/></svg>
          </section>
          <nav class="layers">
            <button class="ls"><i></i><span>LS</span></button>
            ${LAYERS.map(([name, color], i) => html`<button class=${classMap({ layer: true, on: i === 0 })}>
              <span class="sw" style="background:${color}"></span>${name}</button>`)}
          </nav>
        </main>
        <nav class="dock"><button>Components</button><button>Comments</button><button>Properties</button></nav>
      </div>

      <footer class="status">
        <span class="xy">X:2275mil Y:4200mil</span><span class="grid">Grid: 5mil</span><span class="snap">(Hotspot Snap)</span>
        <i></i><span class="mid"></span><i></i>
        <button class="panels">Panels</button>
      </footer>`;
  }
}
